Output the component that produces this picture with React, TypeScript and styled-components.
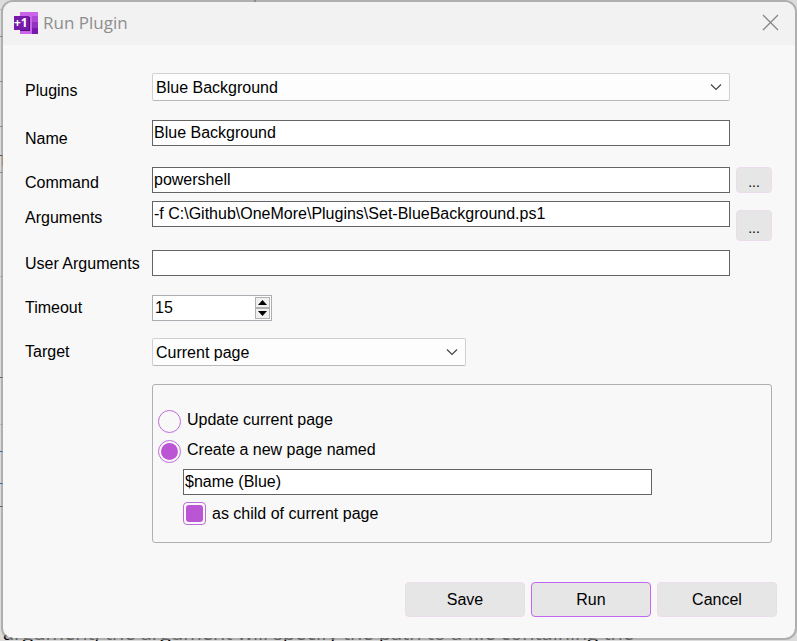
import React, { useState } from 'react';
import styled, { createGlobalStyle } from 'styled-components';

const GlobalStyle = createGlobalStyle`
  * { box-sizing: border-box; }
  body {
    margin: 0;
    background: #dcdcdc;
    color: #000;
    font: 16px/20px "Liberation Sans", Arial, sans-serif;
  }
  input, select, button { font: inherit; color: inherit; }
`;

const Desktop = styled.div`
  position: relative;
  min-height: 100vh;
  display: flex;
  padding: 0 0 1px 1px;
  overflow: hidden;
`;

const Underlay = styled.div`
  position: absolute;
  inset: 0;
  overflow: hidden;
`;

const UnderlayMarks = styled.svg`
  display: block;
  position: absolute;
  inset: 0;
`;

const UnderlayText = styled.p`
  position: absolute;
  left: 3px;
  bottom: -4px;
  margin: 0;
  white-space: nowrap;
  font: 20px/24px "Open Sans", sans-serif;
`;

const Dialog = styled.main`
  position: relative;
  flex: 1;
  display: flex;
  flex-direction: column;
  border: 2px solid rgba(150, 150, 150, 0.65);
  border-radius: 12px;
  background: #f8f8f8;
  background-clip: padding-box;
`;

const TitleBar = styled.header`
  display: flex;
  align-items: center;
  height: 43px;
  padding: 0 16px 2px 11px;
  border-radius: 10px 10px 0 0;
  background: #f2f2f2;
`;

const Title = styled.h1`
  flex: 1;
  margin: 0 0 0 5px;
  color: #8e8e8e;
  font: 17px/24px "Open Sans", sans-serif;
`;

const CloseButton = styled.button`
  display: flex;
  padding: 0;
  border: 0;
  background: none;
  color: #858585;
`;

const Form = styled.form`
  flex: 1;
  display: flex;
  flex-direction: column;
`;

const Fields = styled.div`
  display: grid;
  grid-template-columns: 127px 1fr 42px;
  grid-template-rows: 47px 47px 34px 49px 45px 43px 46px auto;
  align-items: start;
  padding: 28px 23px 0 22px;
`;

const FieldLabel = styled.label<{ $height: number }>`
  grid-column: 1;
  line-height: ${p => p.$height}px;
  white-space: nowrap;
`;

const TextInput = styled.input`
  width: 100%;
  height: 26px;
  padding: 0 1px;
  border: 1px solid #646464;
  border-radius: 0;
  background: #fff;
  outline: none;
`;

const SelectBox = styled.div<{ $width?: string }>`
  display: grid;
  align-items: center;
  width: ${p => p.$width ?? '100%'};
  svg {
    grid-area: 1 / 1;
    justify-self: end;
    margin-right: 8px;
    pointer-events: none;
  }
`;

const Select = styled.select`
  grid-area: 1 / 1;
  appearance: none;
  width: 100%;
  height: 28px;
  padding: 1px 28px 0 3px;
  border: 1px solid #d0d0d0;
  border-bottom-color: #b8b8b8;
  border-radius: 2px;
  background: #fdfdfd;
`;

const Button = styled.button<{ $primary?: boolean }>`
  width: 120px;
  height: 35px;
  padding: 0;
  border: 1px solid ${p => (p.$primary ? '#c466f2' : '#eddcec')};
  border-radius: 4px;
  background: #e6e6e6;
`;

const BrowseButton = styled(Button)<{ $tall?: boolean }>`
  justify-self: end;
  align-self: ${p => (p.$tall ? 'end' : 'start')};
  width: 36px;
  height: ${p => (p.$tall ? 31 : 26)}px;
  margin-bottom: ${p => (p.$tall ? 9 : 0)}px;
  padding-top: 4px;
  font-size: 14px;
`;

const Spinner = styled.div`
  display: flex;
  width: 120px;
  height: 26px;
  padding: 1px;
  border: 1px solid #abadb3;
  background: #fff;
`;

const SpinnerInput = styled.input`
  flex: 1;
  min-width: 0;
  padding: 0 1px;
  border: 0;
  background: none;
  outline: none;
  appearance: textfield;
  &::-webkit-inner-spin-button { appearance: none; }
`;

const SpinnerButtons = styled.div`
  display: flex;
  flex-direction: column;
  width: 15px;
`;

const StepButton = styled.button`
  flex: 1;
  display: flex;
  align-items: center;
  justify-content: center;
  padding: 0;
  border: 1px solid #b0b0b0;
  background: #f0f0f0;
`;

const Group = styled.fieldset`
  grid-column: 2 / 4;
  min-width: 0;
  margin: 0;
  padding: 25px 5px 17px;
  border: 1px solid #b0b0b0;
  border-radius: 3px;
`;

const Choice = styled.label<{ $height: number; $centered?: boolean }>`
  display: flex;
  align-items: ${p => (p.$centered ? 'center' : 'flex-start')};
  gap: 6px;
  height: ${p => p.$height}px;
`;

const Mark = styled.input`
  appearance: none;
  flex: none;
  width: 23px;
  height: 23px;
  margin: 0;
  padding: 2px;
  border: 1px solid #bf6bdb;
  border-radius: ${p => (p.type === 'radio' ? '50%' : '4px')};
  &:checked::before {
    content: '';
    display: block;
    height: 100%;
    border-radius: ${p => (p.type === 'radio' ? '50%' : '3px')};
    background: #ba55d3;
  }
`;

const NestedOptions = styled.div`
  display: grid;
  gap: 7px;
  padding: 0 114px 0 25px;
`;

const Footer = styled.footer`
  display: flex;
  justify-content: flex-end;
  gap: 6px;
  margin-top: auto;
  padding: 24px 18px 21px;
`;

const LogoIcon = () => (
  <svg width="24" height="22" viewBox="0 0 24 22" aria-hidden="true">
    <rect x="6" width="12" height="22" fill="#ca64ea" />
    <rect x="18" width="6" height="4" fill="#ca64ea" />
    <rect x="18" y="4" width="6" height="6" fill="#ae4bd5" />
    <rect x="18" y="10" width="6" height="6" fill="#9332bf" />
    <rect x="18" y="16" width="6" height="6" fill="#7719aa" />
    <rect x="6" y="5" width="10" height="14" fill="#4c1473" />
    <rect y="4" width="15" height="14" fill="#7719aa" />
    <text x="0" y="15" fill="#fff" fontFamily="Open Sans" fontSize="12" fontWeight="700">+1</text>
  </svg>
);

const Chevron = () => (
  <svg width="12" height="8" viewBox="0 0 12 8" fill="none" stroke="#444" strokeWidth="1.200" aria-hidden="true">
    <path d="M1 1.5 6 6.5 11 1.5" />
  </svg>
);

const Arrow = ({ down }: { down?: boolean }) => (
  <svg width="9" height="5" viewBox="0 0 9 5" aria-hidden="true">
    <path d={down ? 'M0 0H9L4.500 5Z' : 'M0 5H9L4.500 0Z'} />
  </svg>
);

const marks = [
  { y: 9, color: '#bdbdbd' },
  { y: 36, color: '#888' },
  { y: 81, color: '#888' },
  { y: 126, color: '#888' },
  { y: 155, color: '#4b3b38' },
  { y: 172, color: '#888' },
  { y: 276, color: '#b5b5b5' },
  { y: 377, color: '#555' },
  { y: 424, color: '#bbb' },
  { y: 451, color: '#12569c' },
  { y: 483, color: '#12569c' },
  { y: 506, color: '#555' },
];

export default function App() {
  const [timeout, setTimeoutValue] = useState(15);

  return (
    <>
      <GlobalStyle />
      <Desktop>
        <Underlay aria-hidden="true">
          <UnderlayMarks width="300" height="641">
            {marks.map(m => (
              <rect key={m.y} y={m.y} width="3" height="1" fill={m.color} />
            ))}
            <rect x="2" y="156" width="1" height="10" fill="#d98324" />
            <rect x="254" width="2" height="2" fill="#777" />
          </UnderlayMarks>
          <UnderlayText>argument, the argument will specify the path to a file containing the</UnderlayText>
        </Underlay>
        <Dialog role="dialog" aria-labelledby="title">
          <TitleBar>
            <LogoIcon />
            <Title id="title">Run Plugin</Title>
            <CloseButton type="button" aria-label="Close">
              <svg width="17" height="17" viewBox="0 0 17 17" stroke="currentColor" strokeWidth="1.300">
                <path d="M1 1 16 16M16 1 1 16" />
              </svg>
            </CloseButton>
          </TitleBar>
          <Form onSubmit={e => e.preventDefault()}>
            <Fields>
              <FieldLabel htmlFor="plugins" $height={36}>Plugins</FieldLabel>
              <SelectBox>
                <Select id="plugins">
                  <option>Blue Background</option>
                </Select>
                <Chevron />
              </SelectBox>

              <FieldLabel htmlFor="name" $height={38}>Name</FieldLabel>
              <TextInput id="name" defaultValue="Blue Background" />

              <FieldLabel htmlFor="command" $height={32}>Command</FieldLabel>
              <TextInput id="command" defaultValue="powershell" />
              <BrowseButton type="button" aria-label="Browse for command">...</BrowseButton>

              <FieldLabel htmlFor="arguments" $height={34}>Arguments</FieldLabel>
              <TextInput id="arguments" defaultValue="-f C:\Github\OneMore\Plugins\Set-BlueBackground.ps1" />
              <BrowseButton type="button" $tall aria-label="Browse for arguments">...</BrowseButton>

              <FieldLabel htmlFor="user-arguments" $height={28}>User Arguments</FieldLabel>
              <TextInput id="user-arguments" />

              <FieldLabel htmlFor="timeout" $height={26}>Timeout</FieldLabel>
              <Spinner>
                <SpinnerInput
                  id="timeout"
                  type="number"
                  value={timeout}
                  onChange={e => setTimeoutValue(Number(e.target.value))}
                />
                <SpinnerButtons>
                  <StepButton type="button" aria-label="Increase" onClick={() => setTimeoutValue(timeout + 1)}>
                    <Arrow />
                  </StepButton>
                  <StepButton type="button" aria-label="Decrease" onClick={() => setTimeoutValue(timeout - 1)}>
                    <Arrow down />
                  </StepButton>
                </SpinnerButtons>
              </Spinner>

              <FieldLabel htmlFor="target" $height={28}>Target</FieldLabel>
              <SelectBox $width="314px">
                <Select id="target">
                  <option>Current page</option>
                </Select>
                <Chevron />
              </SelectBox>

              <Group aria-label="Page options">
                <Choice $height={30}>
                  <Mark type="radio" name="mode" />
                  Update current page
                </Choice>
                <Choice $height={29}>
                  <Mark type="radio" name="mode" defaultChecked />
                  Create a new page named
                </Choice>
                <NestedOptions>
                  <TextInput aria-label="New page name" defaultValue="$name (Blue)" />
                  <Choice $height={23} $centered>
                    <Mark type="checkbox" defaultChecked />
                    as child of current page
                  </Choice>
                </NestedOptions>
              </Group>
            </Fields>
            <Footer>
              <Button type="button">Save</Button>
              <Button type="submit" $primary>Run</Button>
              <Button type="button">Cancel</Button>
            </Footer>
          </Form>
        </Dialog>
      </Desktop>
    </>
  );
}
